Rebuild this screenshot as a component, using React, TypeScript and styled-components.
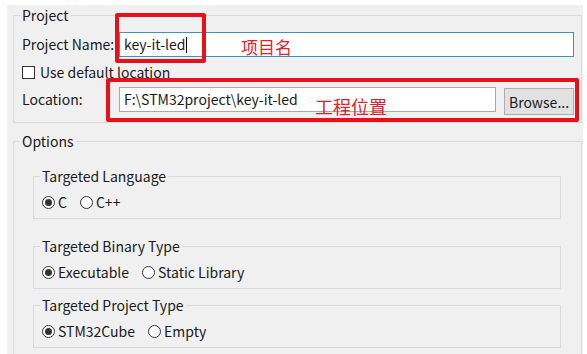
import React from "react";
import styled, { createGlobalStyle } from "styled-components";

const Global = createGlobalStyle`
  html, body { margin: 0; padding: 0; background: #ffffff; }
  body { font-family: "Noto Sans CJK SC", "Noto Sans", sans-serif; font-size: 14px; color: #1a1a1a; }
  * { box-sizing: border-box; }
`;

const Root = styled.div`
  position: relative;
  width: 587px;
  height: 354px;
  overflow: hidden;
  padding: 5px 4px 0 7px;
`;

const Panel = styled.div`
  background: #f0f0f0;
  height: 349px;
  padding: 1px 1px 0 6px;
`;

const Group = styled.fieldset<{ $mt?: number; $pl?: number; $pr?: number; $pb?: number }>`
  margin: ${(p) => p.$mt ?? 0}px 0 0 0;
  border: 1px solid #d9d9d9;
  padding: 0 ${(p) => p.$pr ?? 7}px ${(p) => p.$pb ?? 7}px ${(p) => p.$pl ?? 8}px;
  min-width: 0;
`;

const Legend = styled.legend<{ $ml?: number }>`
  padding: 0 2px;
  margin-left: ${(p) => p.$ml ?? -2}px;
  line-height: 18px;
  height: 18px;
  font-size: 14px;
  color: #1a1a1a;
`;

const Row = styled.div<{ $mt: number; $h: number }>`
  display: flex;
  align-items: center;
  margin-top: ${(p) => p.$mt}px;
  height: ${(p) => p.$h}px;
`;

const TopRow = styled(Row)`
  align-items: flex-start;
`;

const Label = styled.div`
  width: 97px;
  flex: none;
  line-height: 25px;
  white-space: nowrap;
`;

const TextBox = styled.div<{ $focused?: boolean }>`
  flex: 1;
  height: 25px;
  background: #ffffff;
  border: 1px solid ${(p) => (p.$focused ? "#3f8fc0" : "#a9a9a9")};
  padding: 0 4px;
  line-height: 23px;
  white-space: nowrap;
  display: flex;
  align-items: center;
`;

const Caret = styled.span`
  display: inline-block;
  width: 1px;
  height: 16px;
  background: #000;
  margin-left: 1px;
`;

const Button = styled.div`
  flex: none;
  width: 70px;
  height: 27px;
  margin: 1px 0 0 8px;
  background: #e1e1e1;
  border: 1px solid #adadad;
  display: flex;
  align-items: center;
  justify-content: center;
  line-height: 1;
`;

const CheckBox = styled.span`
  width: 13px;
  height: 13px;
  border: 1px solid #333;
  background: #fff;
  flex: none;
`;

const OptText = styled.span<{ $gap?: number }>`
  margin-left: ${(p) => p.$gap ?? 4}px;
  white-space: nowrap;
  line-height: 18px;
`;

const Radio = styled.span<{ $checked?: boolean; $ml?: number }>`
  width: 13px;
  height: 13px;
  border-radius: 50%;
  border: 1px solid #333;
  background: #fff;
  flex: none;
  margin-left: ${(p) => p.$ml ?? 0}px;
  display: flex;
  align-items: center;
  justify-content: center;
  &::after {
    content: "";
    width: 7px;
    height: 7px;
    border-radius: 50%;
    background: ${(p) => (p.$checked ? "#333" : "transparent")};
  }
`;

const RedBox = styled.div<{ $x: number; $y: number; $w: number; $h: number; $b: number }>`
  position: absolute;
  left: ${(p) => p.$x}px;
  top: ${(p) => p.$y}px;
  width: ${(p) => p.$w}px;
  height: ${(p) => p.$h}px;
  border: ${(p) => p.$b}px solid #e8111a;
  border-radius: 2px;
  pointer-events: none;
`;

const Note = styled.div<{ $x: number; $y: number; $size: number }>`
  position: absolute;
  left: ${(p) => p.$x}px;
  top: ${(p) => p.$y}px;
  font-size: ${(p) => p.$size}px;
  line-height: 1;
  color: #e4222a;
  font-weight: 400;
  white-space: nowrap;
`;

type Opt = { label: string; checked?: boolean };

const RadioGroup: React.FC<{ title: string; opts: Opt[]; mt: number; pb?: number; rowMt?: number }> = ({ title, opts, mt, pb, rowMt }) => (
  <Group $mt={mt} $pl={8} $pr={7} $pb={pb ?? 7}>
    <Legend>{title}</Legend>
    <Row $mt={rowMt ?? 8} $h={18}>
      {opts.map((o, i) => (
        <React.Fragment key={o.label}>
          <Radio $checked={o.checked} $ml={i === 0 ? 0 : 13} />
          <OptText $gap={3}>{o.label}</OptText>
        </React.Fragment>
      ))}
    </Row>
  </Group>
);

export default function App() {
  return (
    <>
      <Global />
      <Root>
        <Panel>
          <Group $pr={7} $pb={7}>
            <Legend>Project</Legend>
            <TopRow $mt={8} $h={25}>
              <Label>Project Name:</Label>
              <TextBox $focused>
                key-it-led
                <Caret />
              </TextBox>
            </TopRow>
            <Row $mt={6} $h={18}>
              <CheckBox />
              <OptText $gap={5}>Use default location</OptText>
            </Row>
            <TopRow $mt={6} $h={28}>
              <Label>Location:</Label>
              <TextBox>F:\STM32project\key-it-led</TextBox>
              <Button>Browse...</Button>
            </TopRow>
          </Group>
          <Group $mt={9} $pl={19} $pr={20} $pb={20}>
            <Legend $ml={-13}>Options</Legend>
            <RadioGroup
              title="Targeted Language"
              mt={17}
              opts={[{ label: "C", checked: true }, { label: "C++" }]}
            />
            <RadioGroup
              title="Targeted Binary Type"
              mt={18}
              opts={[{ label: "Executable", checked: true }, { label: "Static Library" }]}
            />
            <RadioGroup
              title="Targeted Project Type"
              mt={7}
              opts={[{ label: "STM32Cube", checked: true }, { label: "Empty" }]}
            />
          </Group>
        </Panel>
        <RedBox $x={115} $y={13} $w={91} $h={50} $b={4} />
        <RedBox $x={106} $y={78} $w={473} $h={44} $b={4} />
        <Note $x={241} $y={38} $size={17}>项目名</Note>
        <Note $x={315} $y={97} $size={18}>工程位置</Note>
      </Root>
    </>
  );
}
